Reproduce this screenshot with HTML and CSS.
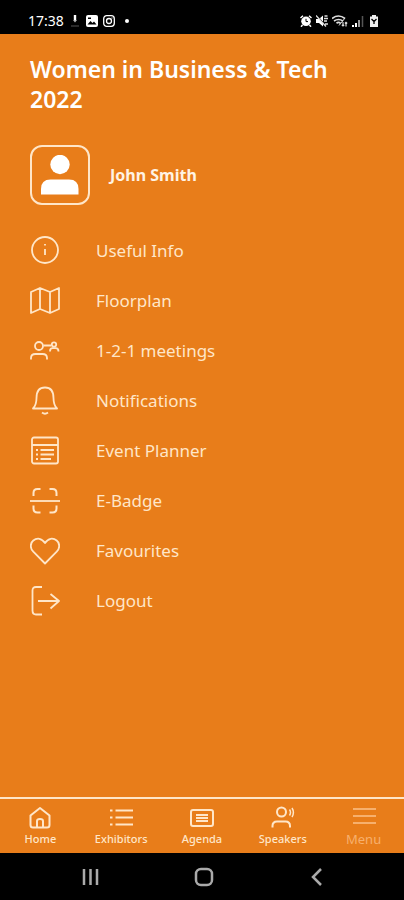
FILE: index.html
```html
<!DOCTYPE html>
<html lang="en">
<head>
    <meta charset="UTF-8">
    <meta name="viewport" content="width=device-width, initial-scale=1.0">
    <title>Women in Business &amp; Tech 2022</title>
    <link rel="stylesheet" href="styles.css">
</head>
<body>
    <div class="status-bar">
        <div class="status-left">
            <span class="time">17:38</span>
            <svg class="status-icon" viewBox="0 0 12 12"><path d="M6 0v5" stroke="#fff" stroke-width="2.4"/><path d="M4 5h4L6 7.500z" fill="#bbb"/><path d="M2 11h8" stroke="#555"/></svg>
            <svg class="status-icon" viewBox="0 0 12 12"><rect width="12" height="12" rx="2" fill="#fff"/><path d="M1.500 9.500l3-3.500 2 2 1.500-1.500 2.500 3z" fill="#000"/><rect x="2" y="2.500" width="3" height="1.500" fill="#000"/></svg>
            <svg class="status-icon" viewBox="0 0 12 12" fill="none" stroke="#fff"><rect x=".7" y=".7" width="10.600" height="10.600" rx="3" stroke-width="1.300"/><circle cx="6" cy="6" r="2.500" stroke-width="1.300"/><path d="M8.500 3h1"/></svg>
            <span class="dot"></span>
        </div>
        <div class="status-right">
            <svg class="status-icon" viewBox="0 0 12 12"><circle cx="6" cy="6.300" r="4.800" fill="#fff"/><path d="M.5 3L3 .7M11.500 3L9 .7M2.500 10L1 11.700M9.500 10l1.500 1.700" stroke="#fff" stroke-width="1.500"/><path d="M6 3.800v2.800h2" fill="none" stroke="#000"/></svg>
            <svg class="status-icon" viewBox="0 0 12 12"><path d="M0 4h3l4-3.500v11L3 8H0z" fill="#fff"/><path d="M1 .5l10 11" stroke="#000"/><path d="M0 .5l10 11M8 3.500h4M8 6h3M8.500 1h3M9 9h3" stroke="#ddd" stroke-width="1.300"/></svg>
            <svg class="status-icon wide" viewBox="0 0 16 12" fill="none" stroke="#ddd" stroke-width="1.700"><path d="M0 3.500q6.500-5 13 0M2 6q4.500-3 9 0M4.500 8.200q2-1.500 4 0"/><path d="M7 10.500L13 3" stroke-width="1"/><path d="M11 7v4M9.800 9.800L11 11l1.200-1.200M14 11.500v-4M12.900 8.500L14 7.400l1.200 1.100" stroke-width="1.200"/></svg>
            <svg class="status-icon" viewBox="0 0 12 12"><path d="M1 12v-2M4 12V8" stroke="#fff" stroke-width="2"/><path d="M7 12V5" stroke="#999" stroke-width="2"/><path d="M10.500 12V1" stroke="#555" stroke-width="1.500"/></svg>
            <svg class="status-icon" viewBox="0 0 12 12"><path d="M4 0h4v1.500h2V12H2V1.500h2z" fill="#eee"/><path d="M3.500 4L6 6.500 8.500 4M6 5v4" fill="none" stroke="#000" stroke-width="1.300"/></svg>
        </div>
    </div>

    <main class="menu-page">
        <h1 class="event-title">Women in Business &amp; Tech 2022</h1>

        <a class="profile" href="#">
            <span class="avatar">
                <svg viewBox="0 0 40 40" fill="#fff"><circle cx="20" cy="9.500" r="9.700"/><path d="M1 39.500V34Q1 24.500 10.500 24.500h18.500Q38.500 24.500 38.500 34v5.500z"/></svg>
            </span>
            <span class="profile-name">John Smith</span>
        </a>

        <nav class="menu">
            <a class="menu-item" href="#">
                <svg class="menu-icon" viewBox="0 0 30 30"><circle cx="15" cy="14" r="13"/><path d="M15 13V19M15 8v1.500"/></svg>
                <span>Useful Info</span>
            </a>
            <a class="menu-item" href="#">
                <svg class="menu-icon" viewBox="0 0 30 30"><path d="M1 6l9-4 10 4 9-4v21l-9 4-10-4-9 4zM10 2v21M20 6v21"/></svg>
                <span>Floorplan</span>
            </a>
            <a class="menu-item" href="#">
                <svg class="menu-icon" viewBox="0 0 30 30"><circle cx="9" cy="10" r="4"/><path d="M1 23.500v-1.500Q1 18 5.500 18h7q4.500 0 4.500 4v1.500M13.500 9.500H21"/><circle cx="24" cy="8.500" r="2.200"/><path d="M20 15.500q0-3.300 2.500-3.300h3q3 0 3 3.300"/></svg>
                <span>1-2-1 meetings</span>
            </a>
            <a class="menu-item" href="#">
                <svg class="menu-icon" viewBox="0 0 30 30"><path d="M3 22.500q3.500-3.500 3.500-10.500Q6.500 1.500 15 1.500t8.500 10.500q0 7 3.500 10.500zM12 26.500q3 2.500 6 0"/></svg>
                <span>Notifications</span>
            </a>
            <a class="menu-item" href="#">
                <svg class="menu-icon" viewBox="0 0 30 30"><rect x="2" y="1.500" width="26" height="26" rx="2"/><path d="M2 9h26M10.500 14H24M10.500 18.500H24M10.500 23H21M6 14h2M6 18.500h2M6 23h2"/></svg>
                <span>Event Planner</span>
            </a>
            <a class="menu-item" href="#">
                <svg class="menu-icon" viewBox="0 0 30 30"><path d="M0 15h30"/><path d="M3.500 10V7q0-4 4-4h3M19.500 3h3q4 0 4 4v3M3.500 19.500v3q0 4 4 4h3M19.500 26.500h3q4 0 4-4v-3" stroke-width="2"/></svg>
                <span>E-Badge</span>
            </a>
            <a class="menu-item" href="#">
                <svg class="menu-icon" viewBox="0 0 30 30"><path d="M15 27.500L3.300 15.700Q.8 13 .8 9.900.8 6.500 3.300 4.500 6 2.300 9.300 2.800 12.500 3.300 15 7q2.500-3.700 5.700-4.200 3.300-.5 6 1.700 2.500 2 2.500 5.400 0 3.100-2.500 5.800z"/></svg>
                <span>Favourites</span>
            </a>
            <a class="menu-item" href="#">
                <svg class="menu-icon" viewBox="0 0 30 30"><path d="M12 1H6Q2.500 1 2.500 4.500v20Q2.500 28.500 6 28.500h6M8 15h21M20.500 8l8.500 7-8.500 7.500"/></svg>
                <span>Logout</span>
            </a>
        </nav>
    </main>

    <nav class="tab-bar">
        <a class="tab" href="#">
            <svg class="tab-icon" viewBox="0 0 24 24"><path d="M2.500 9.500L12 2l9.500 7.500V19q0 2.500-2.500 2.500H5Q2.500 21.500 2.500 19z"/><path d="M9 21v-6q0-2 3-2t3 2v6"/></svg>
            <span>Home</span>
        </a>
        <a class="tab" href="#">
            <svg class="tab-icon" viewBox="0 0 24 24"><path d="M6.500 4.500H24M6.500 11.500H24M6.500 18.500H24M1 4.500h2.500M1 11.500h2.500M1 18.500h2.500"/></svg>
            <span>Exhibitors</span>
        </a>
        <a class="tab" href="#">
            <svg class="tab-icon" viewBox="0 0 24 24"><rect x="1" y="4" width="22" height="16" rx="2"/><path d="M6 9h12M6 12h12M6 15h12"/></svg>
            <span>Agenda</span>
        </a>
        <a class="tab" href="#">
            <svg class="tab-icon" viewBox="0 0 24 24"><circle cx="10.500" cy="6" r="4.500"/><path d="M1.500 21.500v-1.500q0-4.500 4.500-4.500h8.500q4.500 0 4.500 4.500v1.500"/><path d="M18.500 3.500q2 3 0 6M21 2q2.800 4.500 0 9" stroke-width="1.500"/></svg>
            <span>Speakers</span>
        </a>
        <a class="tab active" href="#">
            <svg class="tab-icon" viewBox="0 0 24 24"><path d="M1 3h23M1 10h23M1 17h23"/></svg>
            <span>Menu</span>
        </a>
    </nav>

    <div class="system-nav">
        <button class="system-button" aria-label="Recent apps"><svg viewBox="0 0 20 20"><path d="M3 2v16M9.500 2v16M16 2v16"/></svg></button>
        <button class="system-button" aria-label="Home"><svg viewBox="0 0 20 20"><rect x="2" y="2" width="16" height="16" rx="5"/></svg></button>
        <button class="system-button" aria-label="Back"><svg viewBox="0 0 20 20"><path d="M14 2l-8 8 8 8"/></svg></button>
    </div>
</body>
</html>
```
FILE: styles.css
```css
:root {
    --orange: #e87d1a;
    --cream: #ffe6c8;
    --active: #f7b06d;
}

* {
    box-sizing: border-box;
}

body {
    margin: 0;
    min-height: 100vh;
    display: flex;
    flex-direction: column;
    background: var(--orange);
    color: var(--cream);
    font-family: "Noto Sans", "Open Sans", sans-serif;
}

a {
    color: inherit;
    text-decoration: none;
}

svg {
    display: block;
    flex-shrink: 0;
}

/* Status bar */
.status-bar {
    display: flex;
    justify-content: space-between;
    align-items: center;
    padding: 8px 24px 0 28px;
    height: 34px;
    background: #000;
    color: #fff;
}

.status-left,
.status-right {
    display: flex;
    align-items: center;
    gap: 5px;
}

.status-right {
    gap: 4px;
}

.time {
    font-size: 14px;
    line-height: 20px;
}

.status-icon {
    width: 12px;
    height: 12px;
}

.status-icon.wide {
    width: 16px;
}

.dot {
    width: 4px;
    height: 4px;
    margin-left: 5px;
    border-radius: 50%;
    background: #fff;
}

/* Menu page */
.menu-page {
    flex: 1;
    padding: 20px 30px;
}

.event-title {
    margin: 0 0 31px;
    color: #fff;
    font-size: 23px;
    line-height: 30px;
    font-weight: 600;
}

.profile {
    display: flex;
    align-items: center;
    gap: 20px;
    margin-bottom: 21px;
}

.avatar {
    display: flex;
    align-items: center;
    justify-content: center;
    width: 60px;
    height: 60px;
    border: 2px solid var(--cream);
    border-radius: 12px;
}

.avatar svg {
    width: 40px;
    height: 40px;
}

.profile-name {
    color: #fff3e4;
    font-size: 16px;
    line-height: 24px;
    font-weight: 700;
}

.menu-item {
    display: flex;
    align-items: center;
    gap: 36px;
    height: 50px;
    font-size: 17px;
    line-height: 24px;
}

.menu-icon {
    width: 30px;
    height: 30px;
    fill: none;
    stroke: var(--cream);
    stroke-width: 1.8;
    stroke-linejoin: round;
}

/* Tab bar */
.tab-bar {
    display: flex;
    border-top: 2px solid var(--cream);
}

.tab {
    flex: 1 1 0;
    display: flex;
    flex-direction: column;
    align-items: center;
    padding: 7px 0 5px;
    font-size: 11px;
    line-height: 18px;
    font-weight: 500;
}

.tab-icon {
    width: 24px;
    height: 24px;
    fill: none;
    stroke: var(--cream);
    stroke-width: 2;
    stroke-linejoin: round;
}

.tab.active {
    color: var(--active);
    font-size: 13px;
    font-weight: 400;
}

.tab.active .tab-icon {
    stroke: var(--active);
}

/* System navigation */
.system-nav {
    display: flex;
    justify-content: center;
    align-items: center;
    gap: 93px;
    height: 47px;
    padding-left: 4px;
    background: #000;
}

.system-button {
    padding: 0;
    border: 0;
    background: none;
}

.system-button svg {
    width: 20px;
    height: 20px;
    fill: none;
    stroke: #aaa;
    stroke-width: 2.5;
}
```
